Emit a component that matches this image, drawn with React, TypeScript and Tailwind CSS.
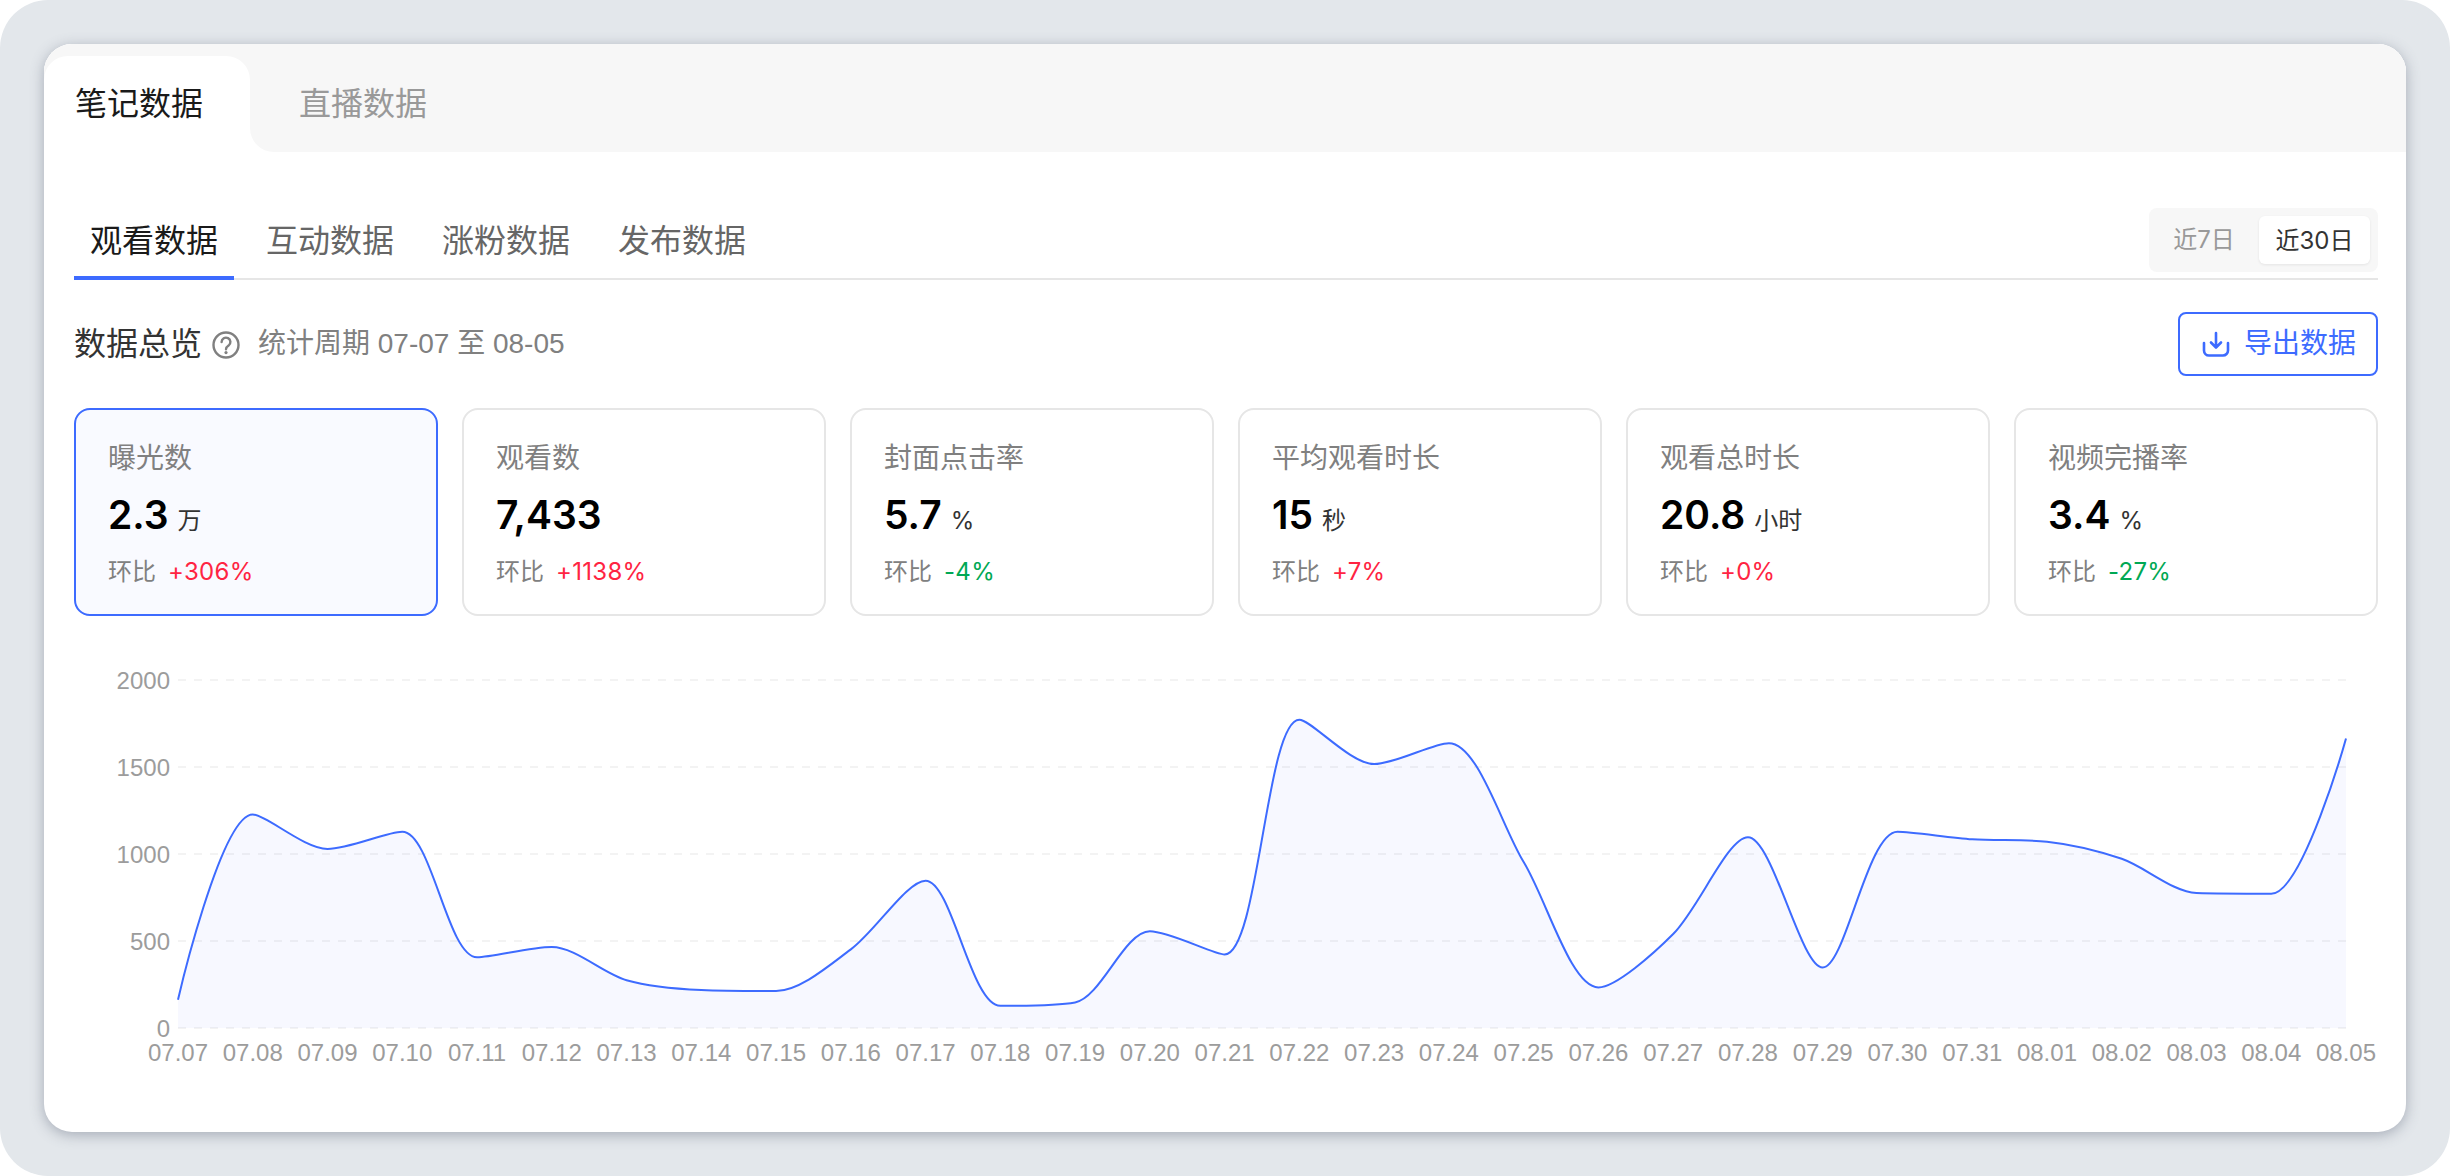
import React from "react";

const FONT = '"Liberation Sans","Noto Sans CJK SC",sans-serif';
const INTER = '"Inter","Noto Sans CJK SC",sans-serif';

const stats = [
  { label: "曝光数", value: "2.3", unit: "万", delta: "+306%", up: true, active: true },
  { label: "观看数", value: "7,433", unit: "", delta: "+1138%", up: true },
  { label: "封面点击率", value: "5.7", unit: "%", delta: "-4%", up: false },
  { label: "平均观看时长", value: "15", unit: "秒", delta: "+7%", up: true },
  { label: "观看总时长", value: "20.8", unit: "小时", delta: "+0%", up: true },
  { label: "视频完播率", value: "3.4", unit: "%", delta: "-27%", up: false },
];

const dates = [
  "07.07","07.08","07.09","07.10","07.11","07.12","07.13","07.14","07.15","07.16",
  "07.17","07.18","07.19","07.20","07.21","07.22","07.23","07.24","07.25","07.26",
  "07.27","07.28","07.29","07.30","07.31","08.01","08.02","08.03","08.04","08.05",
];

const ys = [
  999.7, 814.4, 848.9, 831.8, 957.3, 947, 980.2, 990, 991, 949.4,
  880.7, 1005.8, 1002.4, 931.3, 954.5, 719.7, 764.1, 743.2, 862, 987.4,
  934, 837.3, 967.5, 831.8, 839.3, 841.7, 858.8, 893, 893.7, 738.5,
];

const X0 = 178;
const STEP = (2346 - 178) / 29;
const pts: [number, number][] = ys.map((y, i) => [X0 + i * STEP, y]);

function smoothPath(p: [number, number][], smooth = 0.3) {
  let d = `M${p[0][0]},${p[0][1]}`;
  let cp0 = p[0];
  for (let i = 0; i < p.length - 1; i++) {
    const cur = p[i];
    const next = p[i + 1];
    const after = p[Math.min(i + 2, p.length - 1)];
    let nc: [number, number];
    let c1: [number, number];
    if (i + 1 === p.length - 1) {
      nc = next;
      c1 = next;
    } else {
      const vx = after[0] - cur[0];
      const vy = after[1] - cur[1];
      const lp = Math.hypot(next[0] - cur[0], next[1] - cur[1]);
      const ln = Math.hypot(after[0] - next[0], after[1] - next[1]);
      const r = ln / (ln + lp);
      let ny = next[1] + vy * smooth * r;
      const nx = next[0] + vx * smooth * r;
      ny = Math.min(ny, Math.max(after[1], next[1]));
      ny = Math.max(ny, Math.min(after[1], next[1]));
      const wx = nx - next[0];
      const wy = ny - next[1];
      const cx = next[0] - (wx * lp) / ln;
      let cy = next[1] - (wy * lp) / ln;
      cy = Math.min(cy, Math.max(cur[1], next[1]));
      cy = Math.max(cy, Math.min(cur[1], next[1]));
      const ux = next[0] - cx;
      const uy = next[1] - cy;
      nc = [next[0] + (ux * ln) / lp, next[1] + (uy * ln) / lp];
      c1 = [cx, cy];
    }
    d += `C${cp0[0]},${cp0[1]} ${c1[0]},${c1[1]} ${next[0]},${next[1]}`;
    cp0 = nc;
  }
  return d;
}

const line = smoothPath(pts);
const area = `${line}L2346,1028L178,1028Z`;

function Chart() {
  return (
    <svg width="2362" height="468" viewBox="44 620 2362 468" className="block">
      {[680, 767, 854, 941, 1028].map((y, i) => (
        <g key={y}>
          <line x1="178" x2="2346" y1={y} y2={y} stroke="#f3f3f3" strokeWidth="2" strokeDasharray="8 8" />
          <text x="170" y={y + 8.5} textAnchor="end" fontSize="24" fill="#9c9c9c" fontFamily='"Liberation Sans",sans-serif'>
            {2000 - i * 500 || "0"}
          </text>
        </g>
      ))}
      <path d={area} fill="#3d5bff" fillOpacity="0.045" />
      <path d={line} fill="none" stroke="#3d6bff" strokeWidth="2" />
      {dates.map((d, i) => (
        <text key={d} x={X0 + i * STEP} y="1060.5" textAnchor="middle" fontSize="24" fill="#9c9c9c" fontFamily='"Liberation Sans",sans-serif'>
          {d}
        </text>
      ))}
    </svg>
  );
}

function StatCard({ s }: { s: (typeof stats)[number] }) {
  return (
    <div
      className={`w-[364px] h-[208px] shrink-0 box-border rounded-2xl border-2 pl-[32px] pt-[26px] ${
        s.active ? "border-[#3d6bff] bg-[#f9faff]" : "border-[#e6e6e6] bg-white"
      }`}
      style={{ fontFamily: INTER }}
    >
      <div className="text-[28px] leading-[44px] text-[#808080]">{s.label}</div>
      <div className="mt-[10px] flex items-baseline h-[50px]">
        <span className="text-[39px] leading-[50px] font-semibold text-black">{s.value}</span>
        {s.unit && <span className="ml-[9px] text-[24px] text-[#333333]">{s.unit}</span>}
      </div>
      <div className="mt-[14px] flex items-center text-[24px] leading-[36px]">
        <span className="text-[#808080]">环比</span>
        <span className={`ml-3 tracking-[0.3px] ${s.up ? "text-[#ff2442]" : "text-[#00a854]"}`}>{s.delta}</span>
      </div>
    </div>
  );
}

export default function App() {
  return (
    <div className="w-[2450px] h-[1176px] bg-white" style={{ fontFamily: FONT }}>
      <div className="w-full h-full box-border rounded-[48px] bg-[#e3e7eb] p-[44px]">
        <div className="h-[1088px] w-[2362px] rounded-[28px] bg-white overflow-hidden shadow-[0_3px_14px_rgba(90,100,120,0.45)]">
          {/* top tabs */}
          <div className="flex h-[108px] bg-white">
            <div className="w-[206px] bg-[#f7f7f7] pt-3">
              <div className="h-[96px] rounded-t-3xl bg-white pl-[31px] text-[32px] leading-[96px] text-[#1a1a1a]">
                笔记数据
              </div>
            </div>
            <div className="flex-1 rounded-bl-3xl bg-[#f7f7f7] pl-[49px] text-[32px] leading-[120px] text-[#999999]">
              直播数据
            </div>
          </div>

          <div className="pl-[30px] pr-[28px]">
            {/* sub tabs */}
            <div className="mt-14 flex h-[72px] justify-between border-b-2 border-[#e6e6e6]">
              <div className="flex gap-4">
                {["观看数据", "互动数据", "涨粉数据", "发布数据"].map((t, i) => (
                  <div
                    key={t}
                    className={`w-[160px] h-[72px] text-center text-[32px] leading-[66px] ${
                      i === 0 ? "text-[#1a1a1a] border-b-4 border-[#3d6bff]" : "text-[#666666]"
                    }`}
                  >
                    {t}
                  </div>
                ))}
              </div>
              <div
                className="flex w-[229px] h-16 box-border items-center rounded-lg bg-[#f7f7f7] px-2 text-[24px]"
                style={{ fontFamily: INTER }}
              >
                <div className="w-[102px] pr-2 text-center leading-[50px] text-[#999999]">近7日</div>
                <div className="w-[111px] h-12 rounded-md bg-white text-center leading-[50px] text-[#333333] shadow-[0_1px_3px_rgba(0,0,0,0.08)]">
                  近30日
                </div>
              </div>
            </div>

            {/* overview header */}
            <div className="mt-8 flex h-16 items-center justify-between">
              <div className="flex items-center">
                <span className="text-[32px] leading-[68px] text-[#333333]">数据总览</span>
                <svg width="28" height="28" viewBox="0 0 28 28" fill="none" className="ml-[10px] mt-[1px]">
                  <circle cx="14" cy="14" r="12.5" stroke="#808080" strokeWidth="2.4" />
                  <path d="M9.6 11a4.4 4.4 0 1 1 7 3.6c-1.6 1.1-2.6 1.8-2.6 3.6" stroke="#808080" strokeWidth="2.4" strokeLinecap="round" />
                  <circle cx="14" cy="21.6" r="1.6" fill="#808080" />
                </svg>
                <span className="ml-[18px] text-[28px] leading-[68px] text-[#808080]">统计周期 07-07 至 08-05</span>
              </div>
              <div className="flex w-[200px] h-16 box-border items-center rounded-lg border-2 border-[#3d6bff] pl-[22px] text-[28px] text-[#3d6bff]">
                <svg width="28" height="26" viewBox="0 0 28 26" fill="none" stroke="#3d6bff" strokeWidth="2.6" strokeLinecap="round" strokeLinejoin="round">
                  <path d="M2 12v7.5a5 5 0 0 0 5 5h14a5 5 0 0 0 5-5V12" />
                  <path d="M14 2v14M9 11.5l5 5 5-5" />
                </svg>
                <span className="ml-[14px]">导出数据</span>
              </div>
            </div>

            {/* stat cards */}
            <div className="mt-8 flex gap-6">
              {stats.map((s) => (
                <StatCard key={s.label} s={s} />
              ))}
            </div>
          </div>

          {/* chart */}
          <div className="mt-[4px]">
            <Chart />
          </div>
        </div>
      </div>
    </div>
  );
}
